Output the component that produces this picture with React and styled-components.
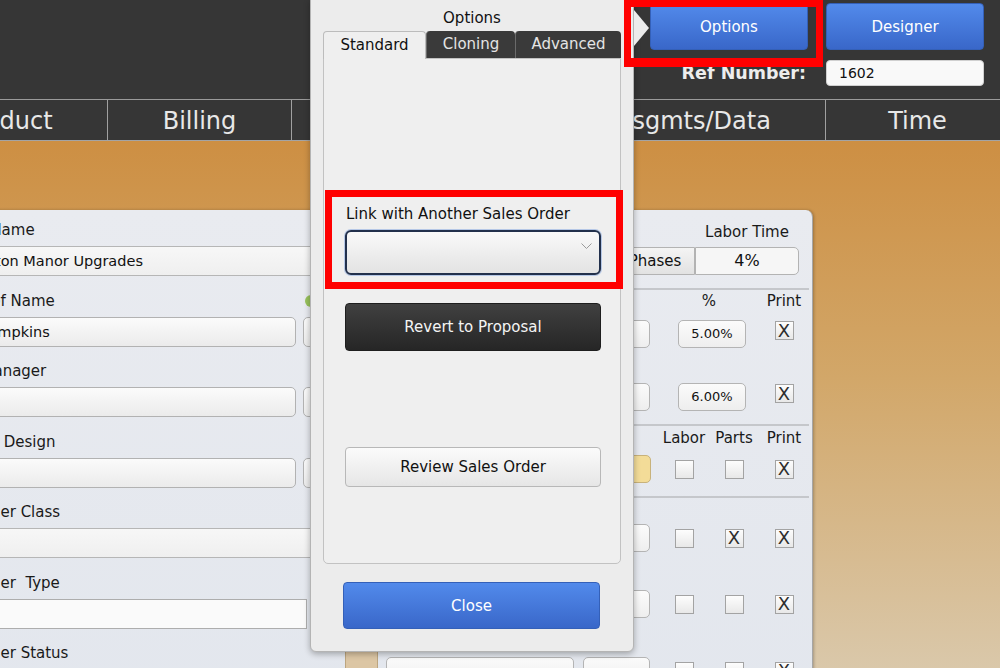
import React from 'react';
import styled, { createGlobalStyle } from 'styled-components';

const GlobalStyle = createGlobalStyle`
  html, body { margin: 0; padding: 0; }
  body {
    background: #363636;
    font-family: "DejaVu Sans", "Liberation Sans", sans-serif;
    overflow: hidden;
  }
  * { box-sizing: border-box; }
`;

const Screen = styled.div`
  position: relative;
  width: 1000px;
  height: 668px;
  overflow: hidden;
  display: flex;
  flex-direction: column;
`;

const Header = styled.header`
  flex: 0 0 99px;
  background: #363636;
  display: flex;
  justify-content: flex-end;
  padding: 3px 16px 0 0;
`;

const HeaderGrid = styled.div`
  display: grid;
  grid-template-columns: 158px 158px;
  grid-template-rows: 47px 26px;
  column-gap: 18px;
  row-gap: 10px;
`;

const BlueButton = styled.button`
  height: ${p => p.$h || 47}px;
  border: 1px solid #3460b8;
  border-radius: 4px;
  background: linear-gradient(#528aeb, #3967c9);
  color: #fff;
  font-family: inherit;
  font-size: 15px;
  padding: 0;
`;

const RefLabel = styled.span`
  justify-self: end;
  align-self: center;
  margin-right: 2px;
  color: #ededed;
  font-size: 17.5px;
  font-weight: bold;
`;

const RefInput = styled.div`
  background: #f9f9f9;
  border-radius: 4px;
  border: 1px solid #d0d0d0;
  font-size: 14px;
  line-height: 24px;
  padding-left: 12px;
  color: #111;
`;

const TabBar = styled.nav`
  flex: 0 0 42px;
  display: flex;
  background: #363636;
  border-top: 1px solid #9a9a9a;
  border-bottom: 1px solid #a4a4a4;
  margin-left: -93px;
`;

const MainTab = styled.div`
  flex: 0 0 ${p => p.$w}px;
  border-right: 1px solid #a0a0a0;
  color: #e8e8e8;
  font-size: 24px;
  line-height: 38px;
  padding-top: 2px;
  text-align: center;
  white-space: nowrap;
`;

const Workspace = styled.main`
  flex: 1;
  min-height: 0;
  padding-top: 69px;
  background: linear-gradient(#cd8f43, #d2a769 45%, #dac8aa);
  overflow: hidden;
`;

const Card = styled.section`
  margin-left: -120px;
  width: 933px;
  height: 560px;
  display: grid;
  grid-template-columns: 450px 1fr;
  background: linear-gradient(#e9ebf0, #e2e6ed);
  border-right: 1px solid #a6a6a6;
  border-top-right-radius: 7px;
  box-shadow: 1px 0 3px rgba(0, 0, 0, 0.25);
`;

const LeftColumn = styled.div`
  padding: 11px 0 0 63px;
  display: flex;
  flex-direction: column;
`;

const Field = styled.div`
  display: flex;
  flex-direction: column;
  gap: 7px;
  margin-bottom: 15.5px;
`;

const FieldLabel = styled.div`
  display: flex;
  justify-content: space-between;
  align-items: center;
  font-size: 15px;
  line-height: 18px;
  color: #1a1a1a;
  white-space: pre;
`;

const StatusDot = styled.span`
  width: 12px;
  height: 12px;
  border-radius: 50%;
  background: #98c25c;
  margin-right: 13px;
`;

const Band = styled.div`
  height: 30px;
  margin-left: -63px;
  padding-left: 86px;
  background: linear-gradient(#f7f7f7, #efefef);
  border-top: 1px solid #b6b6b6;
  border-bottom: 1px solid #b6b6b6;
  font-size: 14.5px;
  line-height: 28px;
  color: #111;
`;

const InputRow = styled.div`
  display: flex;
  gap: 7px;
`;

const RoundInput = styled.div`
  flex: 1;
  height: 30px;
  padding-left: 4px;
  border: 1px solid #b2b2b2;
  border-radius: 5px;
  background: linear-gradient(#fbfbfb, #ebebeb);
  font-size: 14.5px;
  line-height: 28px;
  color: #111;
`;

const SideBox = styled(RoundInput)`
  flex: 0 0 27px;
  padding: 0;
`;

const PlainInput = styled.div`
  height: 30px;
  margin-right: 23px;
  background: #fafafa;
  border: 1px solid #adadad;
`;

const RightSection = styled.div`
  padding: 13px 4px 0 15px;
  display: flex;
  flex-direction: column;
`;

const LaborHead = styled.div`
  align-self: flex-end;
  width: 104px;
  margin-right: 10px;
  text-align: center;
  font-size: 15px;
  line-height: 18px;
  color: #1a1a1a;
`;

const LaborRow = styled.div`
  align-self: flex-end;
  display: flex;
  margin: 6px 10px 0 0;
`;

const Segment = styled.div`
  width: ${p => p.$w}px;
  height: 28px;
  border: 1px solid #b3b3b3;
  border-radius: ${p => (p.$first ? '5px 0 0 5px' : '0 5px 5px 0')};
  background: ${p => (p.$first ? 'linear-gradient(#f4f4f4, #e2e2e2)' : '#f6f6f6')};
  font-size: ${p => (p.$first ? 15 : 16)}px;
  line-height: 26px;
  text-align: center;
  color: #111;
`;

const Divider = styled.div`
  height: 2px;
  margin-top: 13px;
  background: #c5c7cb;
`;

const GridRow = styled.div`
  display: grid;
  grid-template-columns: 41px 197px 76px 50px 50px 50px;
  align-items: center;
  margin-top: ${p => p.$mt}px;
  height: ${p => p.$h || 28}px;
`;

const ColHead = styled.div`
  grid-column: ${p => p.$col};
  text-align: center;
  font-size: 15px;
  line-height: 18px;
  color: #1a1a1a;
`;

const Cell = styled.div`
  grid-column: ${p => p.$col};
  width: ${p => p.$w}px;
  height: 28px;
  border: 1px solid ${p => (p.$yellow ? '#c8b27b' : '#b4b4b4')};
  border-radius: 5px;
  background: ${p => (p.$yellow ? '#f3dc98' : 'linear-gradient(#fbfbfb, #eeeeee)')};
  font-size: 13px;
  line-height: 26px;
  text-align: center;
  color: #111;
  margin-left: ${p => p.$ml || 0}px;
`;

const TanBlock = styled.div`
  grid-column: 1;
  width: 33px;
  height: 40px;
  margin-top: -10px;
  background: #dcc6a4;
  border: 1px solid #bca57f;
`;

const CheckBox = styled.div`
  grid-column: ${p => p.$col};
  justify-self: center;
  align-self: ${p => (p.$top ? 'start' : 'center')};
  margin-top: ${p => (p.$top ? 1 : 0)}px;
  width: 19px;
  height: 19px;
  border: 1px solid #a3a3a3;
  background: linear-gradient(#fdfdfd, #e8e8e8);
  display: flex;
  align-items: center;
  justify-content: center;
  font-size: 18px;
  line-height: 1;
  color: #2e2e2e;
`;

const Popover = styled.div`
  position: absolute;
  left: 310px;
  top: -1px;
  width: 324px;
  height: 653px;
  z-index: 5;
  display: flex;
  flex-direction: column;
  padding: 9px 12px 0;
  background: #ececec;
  border: 1px solid #b4b4b4;
  border-radius: 0 0 6px 6px;
  box-shadow: 0 2px 6px rgba(0, 0, 0, 0.3);

  &::after {
    content: '';
    position: absolute;
    right: -16px;
    top: 10px;
    border-left: 15px solid #ececec;
    border-top: 18px solid transparent;
    border-bottom: 18px solid transparent;
  }
`;

const PopTitle = styled.div`
  text-align: center;
  font-size: 15px;
  line-height: 18px;
  color: #111;
`;

const PopTabs = styled.div`
  display: flex;
  margin-top: 4px;
  height: 27px;
  position: relative;
  z-index: 1;
`;

const PopTab = styled.div`
  flex: 0 0 ${p => p.$w}px;
  border-radius: 4px 4px 0 0;
  font-size: 15px;
  line-height: 27px;
  text-align: center;
  ${p =>
    p.$active
      ? `background: #efefef; color: #111; border: 1px solid #bcbcbc; border-bottom: none; height: 28px;`
      : `background: #3a3a3a; color: #e4e4e4; border-left: 1px solid #6a6a6a;`}
`;

const TabPanel = styled.div`
  height: 506px;
  display: flex;
  flex-direction: column;
  background: #efefef;
  border: 1px solid #c2c2c2;
  border-radius: 0 0 5px 5px;
`;

const Highlight = styled.div`
  margin: 131px -3px 0 1px;
  padding: 8px 15px 7px 13px;
  border: 7px solid #ff0000;
  display: flex;
  flex-direction: column;
  gap: 7px;
`;

const LinkLabel = styled.div`
  padding-left: 1px;
  font-size: 15px;
  line-height: 18px;
  color: #111;
`;

const Select = styled.div`
  height: 45px;
  display: flex;
  justify-content: flex-end;
  align-items: flex-start;
  padding: 11px 7px 0 0;
  border: 2px solid #22304c;
  border-radius: 6px;
  background: linear-gradient(#f9f9f9, #e3e3e3);
  box-shadow: 0 0 0 1px rgba(110, 150, 220, 0.45);
`;

const PanelButton = styled.button`
  height: ${p => p.$h}px;
  margin: ${p => p.$mt}px 19px 0 21px;
  border-radius: 4px;
  font-family: inherit;
  font-size: 15px;
  padding: 0;
  ${p =>
    p.$dark
      ? `background: linear-gradient(#404040, #262626); color: #f4f4f4; border: 1px solid #1e1e1e;`
      : `background: linear-gradient(#fbfbfb, #e6e6e6); color: #111; border: 1px solid #b8b8b8;`}
`;

const CloseButton = styled(BlueButton)`
  margin: 18px 21px 0 20px;
`;

const OptionsMark = styled.div`
  position: absolute;
  left: 624px;
  top: 0;
  width: 199px;
  height: 67px;
  border: 7px solid #ff0000;
  border-bottom-width: 9px;
  z-index: 6;
`;

const Chevron = () => (
  <svg width="11" height="7" viewBox="0 0 11 7">
    <polyline points="0.5,0.5 5.5,5.5 10.5,0.5" fill="none" stroke="#9a9a9a" strokeWidth="1" />
  </svg>
);

const mainTabs = [
  { label: 'Product', w: 201 },
  { label: 'Billing', w: 184 },
  { label: 'Phases', w: 270 },
  { label: 'Asgmts/Data', w: 264 },
  { label: 'Time', w: 184 },
];

const checkRows = [
  { mt: 26, labor: false, parts: true, print: true },
  { mt: 38, labor: false, parts: false, print: true },
];

const App = () => {
  return (
    <Screen>
      <GlobalStyle />
      <Header>
        <HeaderGrid>
          <BlueButton>Options</BlueButton>
          <BlueButton>Designer</BlueButton>
          <RefLabel>Ref Number:</RefLabel>
          <RefInput>1602</RefInput>
        </HeaderGrid>
      </Header>

      <TabBar>
        {mainTabs.map(t => (
          <MainTab key={t.label} $w={t.w}>{t.label}</MainTab>
        ))}
      </TabBar>

      <Workspace>
        <Card>
          <LeftColumn>
            <Field>
              <FieldLabel>Order Name</FieldLabel>
              <Band>Carlton Manor Upgrades</Band>
            </Field>
            <Field>
              <FieldLabel>Cust Ref Name<StatusDot /></FieldLabel>
              <InputRow>
                <RoundInput>John Simpkins</RoundInput>
                <SideBox />
              </InputRow>
            </Field>
            <Field>
              <FieldLabel>Proj. Manager</FieldLabel>
              <InputRow>
                <RoundInput />
                <SideBox />
              </InputRow>
            </Field>
            <Field>
              <FieldLabel>System Design</FieldLabel>
              <InputRow>
                <RoundInput />
                <SideBox />
              </InputRow>
            </Field>
            <Field>
              <FieldLabel>Customer Class</FieldLabel>
              <Band />
            </Field>
            <Field>
              <FieldLabel>Customer  Type</FieldLabel>
              <PlainInput />
            </Field>
            <Field>
              <FieldLabel>Customer Status</FieldLabel>
              <PlainInput />
            </Field>
          </LeftColumn>

          <RightSection>
            <LaborHead>Labor Time</LaborHead>
            <LaborRow>
              <Segment $first $w={80}>Phases</Segment>
              <Segment $w={104}>4%</Segment>
            </LaborRow>
            <Divider />
            <GridRow $mt={2} $h={18}>
              <ColHead $col="4 / span 2">%</ColHead>
              <ColHead $col="6">Print</ColHead>
            </GridRow>
            <GridRow $mt={10}>
              <Cell $col="2" $w={188} />
              <Cell $col="3" $w={67} />
              <Cell $col="4 / span 2" $w={68} $ml={19}>5.00%</Cell>
              <CheckBox $col="6" $top>X</CheckBox>
            </GridRow>
            <GridRow $mt={35}>
              <Cell $col="2" $w={188} />
              <Cell $col="3" $w={67} />
              <Cell $col="4 / span 2" $w={68} $ml={19}>6.00%</Cell>
              <CheckBox $col="6" $top>X</CheckBox>
            </GridRow>
            <Divider />
            <GridRow $mt={3} $h={18}>
              <ColHead $col="4">Labor</ColHead>
              <ColHead $col="5">Parts</ColHead>
              <ColHead $col="6">Print</ColHead>
            </GridRow>
            <GridRow $mt={8}>
              <Cell $col="2" $w={188} />
              <Cell $col="3" $w={68} $yellow>0%</Cell>
              <CheckBox $col="4" />
              <CheckBox $col="5" />
              <CheckBox $col="6">X</CheckBox>
            </GridRow>
            <Divider />
            {checkRows.map((r, i) => (
              <GridRow key={i} $mt={r.mt}>
                <Cell $col="2" $w={188} />
                <Cell $col="3" $w={67}>0%</Cell>
                <CheckBox $col="4">{r.labor ? 'X' : ''}</CheckBox>
                <CheckBox $col="5">{r.parts ? 'X' : ''}</CheckBox>
                <CheckBox $col="6">{r.print ? 'X' : ''}</CheckBox>
              </GridRow>
            ))}
            <GridRow $mt={38}>
              <TanBlock />
              <Cell $col="2" $w={188} />
              <Cell $col="3" $w={67} />
              <CheckBox $col="4" />
              <CheckBox $col="5" />
              <CheckBox $col="6">X</CheckBox>
            </GridRow>
          </RightSection>
        </Card>
      </Workspace>

      <Popover>
        <PopTitle>Options</PopTitle>
        <PopTabs>
          <PopTab $active $w={103}>Standard</PopTab>
          <PopTab $w={89}>Cloning</PopTab>
          <PopTab $w={106}>Advanced</PopTab>
        </PopTabs>
        <TabPanel>
          <Highlight>
            <LinkLabel>Link with Another Sales Order</LinkLabel>
            <Select>
              <Chevron />
            </Select>
          </Highlight>
          <PanelButton $dark $h={48} $mt={14}>Revert to Proposal</PanelButton>
          <PanelButton $h={40} $mt={96}>Review Sales Order</PanelButton>
        </TabPanel>
        <CloseButton>Close</CloseButton>
      </Popover>

      <OptionsMark />
    </Screen>
  );
};

export default App;
